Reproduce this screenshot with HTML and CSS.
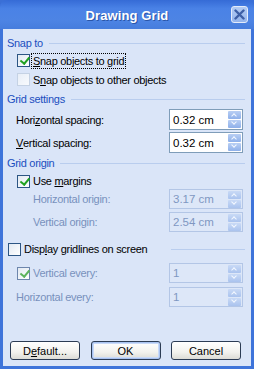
FILE: index.html
```html
<!DOCTYPE html>
<html>
<head>
<meta charset="utf-8">
<link rel="stylesheet" href="styles.css">
</head>
<body>
<div class="window">
  <div class="titlebar">
    <span class="title">Drawing Grid</span>
    <span class="close"><svg width="11" height="11" viewBox="0 0 11 11"><path d="M1.5 1.5 L9.5 9.5 M9.5 1.5 L1.5 9.5" stroke="#3d5fa6" stroke-width="2.4" stroke-linecap="round"/></svg></span>
  </div>
  <div class="client">
    <div class="head"><span>Snap to</span><i class="rule"></i></div>
    <div class="row chk r-snap1"><span class="box on"></span><span class="focus"><u>S</u>nap objects to grid</span></div>
    <div class="row chk r-snap2"><span class="box faint"></span><span>S<u>n</u>ap objects to other objects</span></div>

    <div class="head h-grid"><span>Grid settings</span><i class="rule"></i></div>
    <div class="row field r-hsp"><span class="lbl">Hori<u>z</u>ontal spacing:</span><span class="spin"><span class="val">0.32 cm</span><span class="btns"><span class="up"></span><span class="dn"></span></span></span></div>
    <div class="row field r-vsp"><span class="lbl"><u>V</u>ertical spacing:</span><span class="spin"><span class="val">0.32 cm</span><span class="btns"><span class="up"></span><span class="dn"></span></span></span></div>

    <div class="head h-origin"><span>Grid origin</span><i class="rule"></i></div>
    <div class="row chk r-margins"><span class="box on"></span><span>Use <u>m</u>argins</span></div>
    <div class="row field dis r-ho"><span class="lbl">Horizontal origin:</span><span class="spin"><span class="val">3.17 cm</span><span class="btns"><span class="up"></span><span class="dn"></span></span></span></div>
    <div class="row field dis r-vo"><span class="lbl">Vertical origin:</span><span class="spin"><span class="val">2.54 cm</span><span class="btns"><span class="up"></span><span class="dn"></span></span></span></div>

    <div class="row chk r-display"><span class="box"></span><span>Disp<u>l</u>ay gridlines on screen</span><i class="rule"></i></div>
    <div class="row field dis r-ve"><span class="lbl chklbl"><span class="box on dimbox"></span>Vertical every:</span><span class="spin"><span class="val">1</span><span class="btns"><span class="up"></span><span class="dn"></span></span></span></div>
    <div class="row field dis r-he"><span class="lbl hlbl">Horizontal every:</span><span class="spin"><span class="val">1</span><span class="btns"><span class="up"></span><span class="dn"></span></span></span></div>

    <div class="buttons">
      <span class="btn">D<u>e</u>fault...</span>
      <span class="btn def">OK</span>
      <span class="btn">Cancel</span>
    </div>
  </div>
</div>
</body>
</html>
```

FILE: styles.css
```css
* { box-sizing: border-box; }
html, body { margin: 0; padding: 0; }
body {
  width: 254px;
  height: 369px;
  overflow: hidden;
  font-family: "Liberation Sans", Arial, sans-serif;
  font-size: 11px;
  letter-spacing: -0.3px;
  color: #000;
  background: #3a6fd6;
}
u { text-decoration: underline; text-underline-offset: 1px; }
.window {
  width: 254px;
  height: 369px;
  display: flex;
  flex-direction: column;
  background: #3e74da;
  border-radius: 7px 7px 0 0;
}
.titlebar {
  height: 29px;
  flex: none;
  display: flex;
  align-items: center;
  justify-content: center;
  position: relative;
  background: linear-gradient(#356bd6 0%, #4a82e6 30%, #4d84e4 70%, #467ddd 100%);
  border-radius: 7px 7px 0 0;
}
.title {
  color: #fff;
  font-weight: bold;
  font-size: 13px;
  letter-spacing: 0.1px;
  margin-top: 1px;
  text-shadow: 1px 1px 0 #2a55a8;
}
.close {
  position: absolute;
  left: 231px;
  top: 6px;
  width: 17px;
  height: 17px;
  border: 1px solid #e4ecfa;
  border-radius: 3px;
  background: linear-gradient(#b2cbf3, #94b4ec);
  display: flex;
  align-items: center;
  justify-content: center;
}
.client {
  flex: 1;
  margin: 0 3px 3px 3px;
  background: #dae5f8;
  padding: 6px 6px 0 4px;
  display: flex;
  flex-direction: column;
}
.head {
  height: 16px;
  display: flex;
  align-items: center;
  color: #1b4fbf;
}
.head .rule, .r-display .rule {
  flex: 1;
  height: 1px;
  background: #b9cdee;
  margin-left: 6px;
  margin-top: 1px;
}
.r-display .rule { margin-left: 24px; }
.row { display: flex; align-items: center; }
.chk { padding-left: 10px; }
.box {
  width: 13px;
  height: 13px;
  flex: none;
  border: 1px solid #2c5584;
  background: linear-gradient(135deg, #e2e9f2, #ffffff);
  margin-right: 3px;
  position: relative;
}
.box.on::after {
  content: "";
  position: absolute;
  left: 3.5px;
  top: 0px;
  width: 3.5px;
  height: 7px;
  border: solid #21a121;
  border-width: 0 2.5px 2.5px 0;
  transform: rotate(40deg);
}
.box.faint {
  border-color: #c5d2e4;
  background: linear-gradient(135deg, #e8eef7, #f8fafd);
}
.focus {
  outline: 1px dotted #000;
  outline-offset: 0;
  padding: 1px 1px 1px 1px;
  margin-left: -1px;
}
.r-snap1 { height: 19px; }
.r-snap2 { height: 19px; }
.h-grid { margin-top: 2px; }
.field { padding-left: 9px; justify-content: space-between; }
.lbl { display: flex; align-items: center; }
.spin {
  width: 74px;
  height: 21px;
  border: 1px solid #7f9db9;
  background: #fff;
  display: flex;
  align-items: center;
  justify-content: space-between;
  padding: 0 1px 0 3px;
  margin-right: 2px;
}
.val { font-size: 11.5px; letter-spacing: 0; }
.btns {
  width: 13px;
  height: 17px;
  display: flex;
  flex-direction: column;
  gap: 1px;
}
.btns span {
  flex: 1;
  border-radius: 1px;
  background: linear-gradient(#b9cff4, #8eb0ea);
  position: relative;
}
.btns span::after {
  content: "";
  position: absolute;
  left: 4px;
  width: 3px;
  height: 3px;
  border: solid #f4f8ff;
  border-width: 1.5px 0 0 1.5px;
}
.btns .up::after { top: 3px; transform: rotate(45deg); }
.btns .dn::after { top: 0px; transform: rotate(225deg); }
.r-hsp { margin-top: 2px; height: 21px; }
.r-vsp { margin-top: 2px; height: 21px; }
.h-origin { margin-top: 2px; }
.r-margins { margin-top: 2px; height: 16px; }
.dis .lbl { color: #7891bd; padding-left: 17px; }
.dis .spin {
  border-color: #b3c6e6;
  background: #dde7f8;
  color: #7f97c2;
}
.dis .btns span { background: linear-gradient(#c9daf6, #aac3ee); }
.r-ho { height: 20px; }
.r-ho .spin, .r-vo .spin, .r-ve .spin, .r-he .spin { height: 20px; }
.r-vo { margin-top: 3px; height: 20px; }
.r-display { margin-top: 8px; height: 18px; padding-left: 1px; }
.r-ve { margin-top: 5px; height: 20px; }
.dis .chklbl { padding-left: 1px; }
.dimbox { border-color: #6d86ad; margin-right: 3px; }
.dimbox.on::after { border-color: #5cb35c; }
.r-he { margin-top: 4px; height: 20px; }
.dis .hlbl { padding-left: 0; }
.buttons {
  margin-top: 34px;
  display: flex;
  justify-content: space-between;
  padding: 0 4px 0 3px;
}
.btn {
  width: 70px;
  height: 19px;
  border: 1px solid #2c3c54;
  border-radius: 3px;
  background: linear-gradient(#ffffff, #f2f2ee 60%, #dcdcd6);
  display: flex;
  align-items: center;
  justify-content: center;
  letter-spacing: 0;
}
.btn.def {
  box-shadow: inset 0 0 0 1px #a8c2f0, inset 0 0 0 2px #c9daf8;
}
```
